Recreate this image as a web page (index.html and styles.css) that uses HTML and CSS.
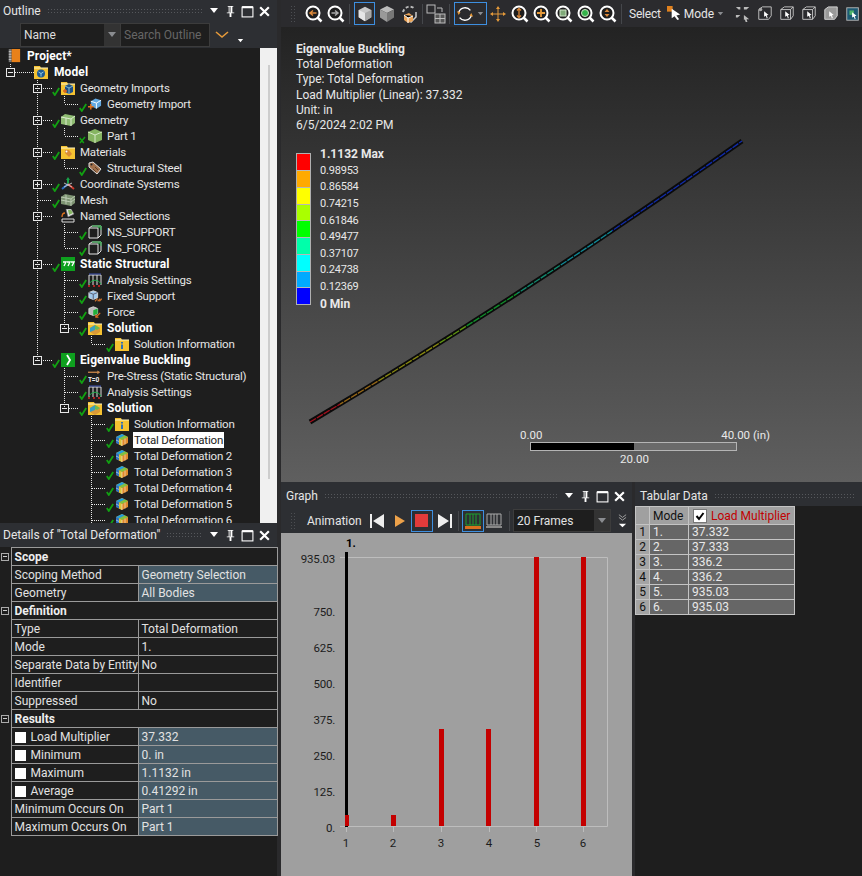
FILE: index.html
```html
<!DOCTYPE html>
<html lang="en">
  <head>
    <meta charset="UTF-8" />
    <title>Mechanical</title>
    <link rel="stylesheet" href="styles.css">
  </head>
  <body>
    <svg class="defs" width="0" height="0">
      <symbol id="i-drop" viewBox="0 0 10 6"><path d="M1 0h8L5 5z" fill="#fff"/></symbol>
      <symbol id="i-drop-gray" viewBox="0 0 10 6"><path d="M1 0h8L5 5z" fill="#8a8c90"/></symbol>
      <symbol id="i-pin" viewBox="0 0 12 14"><path d="M3 1h6v1H8v6h2v1H7v4H5V9H2V8h2V2H3zM5 2v6h1V2z" fill="#fff"/></symbol>
      <symbol id="i-max" viewBox="0 0 12 12"><rect x="1" y="2" width="10" height="9" fill="none" stroke="#fff" stroke-width="1"/><path d="M1 2h10" stroke="#fff" stroke-width="2"/></symbol>
      <symbol id="i-close" viewBox="0 0 12 12"><path d="M2 2l8 8M10 2l-8 8" stroke="#fff" stroke-width="2"/></symbol>

      <symbol id="i-check" viewBox="0 0 8 9"><path d="M.8 5l2 3L7.2 1" fill="none" stroke="#12a012" stroke-width="1.8"/></symbol>
      <symbol id="i-check-x" viewBox="0 0 8 9"><path d="M.8 3l4 5M1 8l5-6" fill="none" stroke="#12a012" stroke-width="1.5"/></symbol>
      <symbol id="i-book" viewBox="0 0 14 16"><rect x="4" y="0" width="10" height="15" fill="#e8811a"/><rect x="1" y="0" width="3" height="15" fill="#777"/><path d="M1 3h3M1 6h3M1 9h3M1 12h3" stroke="#ccc"/></symbol>
      <symbol id="i-folder" viewBox="0 0 14 14"><path d="M0 1h6l1 2h7v11H0z" fill="#f5c231"/><path d="M0 3h14" stroke="#fff3c0"/></symbol>
      <symbol id="i-model" viewBox="0 0 14 14"><use href="#i-folder"/><circle cx="7" cy="8.500" r="4" fill="#1d5a94"/><path d="M4.500 7l2.500 1.500L9.500 7M7 8.500v3" stroke="#9cd" fill="none"/></symbol>
      <symbol id="i-geoimp" viewBox="0 0 14 14"><use href="#i-folder"/><path d="M4 5l4-2 4 2v6l-4 2-4-2z" fill="#1d4f86"/><path d="M4 5l4 2 4-2M8 7v6" stroke="#8bc" fill="none"/><path d="M2 10h4M4 8v4" stroke="#d9631e" stroke-width="1.500"/></symbol>
      <symbol id="i-import" viewBox="0 0 15 14"><path d="M3 4l5-3 6 2v6l-5 3-6-3z" fill="#63a9e2"/><path d="M3 4l6 2 5-3M9 6v6" stroke="#fff" fill="none"/><path d="M0 10h6M3 7v6" stroke="#e0731e" stroke-width="1.600"/></symbol>
      <symbol id="i-geom" viewBox="0 0 14 14"><path d="M0 4l4-3 10 2v7l-4 3-10-2z" fill="#8fbc72"/><path d="M0 4l10 2 4-3M10 6v7M5 5v7" stroke="#dcebd0" fill="none"/></symbol>
      <symbol id="i-part" viewBox="0 0 14 14"><path d="M7 0l7 3v8l-7 3-7-3V3z" fill="#86b562"/><path d="M0 3l7 3 7-3M7 6v8" stroke="#d5e8c6" fill="none"/></symbol>
      <symbol id="i-mats" viewBox="0 0 14 14"><use href="#i-folder"/><path d="M4 5h4l3 4-3 3-4-4z" fill="#d98a35"/><circle cx="5.500" cy="6.500" r="1" fill="#fff"/></symbol>
      <symbol id="i-tag" viewBox="0 0 14 14"><path d="M1 2l4-1 8 7-4 5-8-7z" fill="#a0704c" stroke="#ddd"/><path d="M7 6l3 3M5 8l3 3" stroke="#5f3f25"/><circle cx="3.500" cy="3.500" r="1" fill="#222"/></symbol>
      <symbol id="i-coord" viewBox="0 0 14 14"><path d="M7 7V2" stroke="#19a34a" stroke-width="2"/><path d="M5 3l2-3 2 3z" fill="#19a34a"/><path d="M7 7l-6 5" stroke="#2d6cc0" stroke-width="2"/><path d="M7 7l6 5" stroke="#d0392b" stroke-width="2"/><path d="M3 6l8 4M11 6l-8 4" stroke="#ddd" stroke-width=".8"/></symbol>
      <symbol id="i-mesh" viewBox="0 0 14 14"><path d="M0 4l4-3 10 2v7l-4 3-10-2z" fill="#7e9372"/><path d="M0 4l10 2 4-3M10 6v7M5 2v9M0 7l10 2 4-3" stroke="#c9d6c0" stroke-width=".8" fill="none"/></symbol>
      <symbol id="i-named" viewBox="0 0 14 14"><path d="M5 0h5l3 5-6 3z" fill="#e9e9e9" stroke="#777" stroke-width=".6"/><path d="M7 1h3l2 3-4 2z" fill="#86b562"/><path d="M1 10h12v3H1z" fill="none" stroke="#ddd"/><path d="M1 8c0-3 1-4 3-4" stroke="#e0731e" fill="none" stroke-width="1.300"/></symbol>
      <symbol id="i-ns" viewBox="0 0 14 14"><path d="M1 3h9v10H1zM1 3l3-2h9v9l-3 3" fill="none" stroke="#e4e4e4"/><path d="M4 1h9M13 1v4M10 3l3-2" stroke="#2fb34a"/></symbol>
      <symbol id="i-static" viewBox="0 0 14 14"><rect width="14" height="14" fill="#0ea01e"/><path d="M2 5h3l-2 4M6 5h3l-2 4M10 5h3l-2 4" fill="none" stroke="#fff" stroke-width="1.300"/></symbol>
      <symbol id="i-eigen" viewBox="0 0 14 14"><rect width="14" height="14" fill="#0ea01e"/><path d="M6 2l3 5-3 5" fill="none" stroke="#fff" stroke-width="1.800"/></symbol>
      <symbol id="i-analysis" viewBox="0 0 14 14"><path d="M1 2h12v10M1 2v10M5 2v10M9 2v10" stroke="#ddd" fill="none"/><path d="M1 1h12" stroke="#3a4fb0"/><path d="M1 11c3-5 9-5 12 0" stroke="#1cb04a" fill="none"/><path d="M0 13h14" stroke="#d22" stroke-dasharray="2 3" stroke-width="1.500"/></symbol>
      <symbol id="i-fixed" viewBox="0 0 16 14"><path d="M1 3l5-2 5 2v6l-5 2-5-2z" fill="#9fc7ea" stroke="#ddd"/><path d="M1 3l5 2 5-2M6 5v6" stroke="#556" fill="none"/><path d="M8 13l3-3M11 13l3-3M13 13l3-3" stroke="#c9702a" stroke-width="1.300"/></symbol>
      <symbol id="i-force" viewBox="0 0 16 14"><path d="M1 3l5-2 5 2v6l-5 2-5-2z" fill="#bbb" stroke="#ddd"/><path d="M6 5l5-2v6l-5 2z" fill="#22b03a"/><path d="M14 8l-5 5M9 10v3h3" stroke="#d9701e" stroke-width="1.400" fill="none"/></symbol>
      <symbol id="i-solution" viewBox="0 0 14 14"><use href="#i-folder"/><path d="M2 7l5-3 5 3v4l-5 3-5-3z" fill="#d99a38"/><path d="M2 7l5-3v5l-5 2z" fill="#3aa0c0"/><path d="M7 4l5 3-3 2-2-1z" fill="#6dbb50"/></symbol>
      <symbol id="i-info" viewBox="0 0 14 14"><use href="#i-folder"/><path d="M6 5h2v1.500H6zM6 7.500h2V12H6z" fill="#2f6fb5"/></symbol>
      <symbol id="i-result" viewBox="0 0 14 14"><path d="M1 4l6-3 6 3v6l-6 3-6-3z" fill="#e08b2c"/><path d="M1 4l6-3 3 1.500-6 3z" fill="#23a0d8"/><path d="M4 5.500l6-3 3 1.500-6 3z" fill="#7fc240"/><path d="M1 4v6l3 1.500V5.500z" fill="#2c70c0"/><path d="M4 5.500L7 7v6l-3-1.500z" fill="#d9c23a"/><path d="M7 7v6M1 7l3 1.500M10 5.500v6" stroke="#fff" stroke-width=".5"/></symbol>
      <symbol id="i-chevron" viewBox="0 0 14 8"><path d="M1 1l6 5 6-5" fill="none" stroke="#e59a3a" stroke-width="1.600"/></symbol>

      <symbol id="mag" viewBox="0 0 20 20"><circle cx="9" cy="9" r="6.500" fill="#1e1e1e" stroke="#fff" stroke-width="2"/><path d="M13.500 13.500l4 4" stroke="#fff" stroke-width="2.500"/></symbol>
      <symbol id="t-back" viewBox="0 0 20 20"><use href="#mag"/><path d="M12.500 9H7M9 6.500L6 9l3 2.500" fill="none" stroke="#e08b3a" stroke-width="1.500"/></symbol>
      <symbol id="t-next" viewBox="0 0 20 20"><use href="#mag"/><path d="M5.500 9H11M9 6.500L12 9l-3 2.500" fill="none" stroke="#aaa" stroke-width="1.500"/></symbol>
      <symbol id="t-iso" viewBox="0 0 20 20"><path d="M10 2l7 3.500v8L10 18l-7-4.500v-8z" fill="#c9c9c9"/><path d="M3 5.500L10 9v9l-7-4.500z" fill="#e6e6e6"/><path d="M10 9l7-3.500v8L10 18z" fill="#a8a8a8"/></symbol>
      <symbol id="t-iso2" viewBox="0 0 20 20"><path d="M10 2l7 3.500-7 3.500-7-3.500z" fill="#bbb"/><path d="M3 5.500L10 9v9l-7-4.500z" fill="#999"/><path d="M10 9l7-3.500v8L10 18z" fill="#777"/></symbol>
      <symbol id="t-views" viewBox="0 0 20 20"><path d="M4 8a7 7 0 0 1 12-3" fill="none" stroke="#bbb" stroke-width="2" stroke-dasharray="3 2"/><path d="M17 8v5l-5 5-3-2" fill="none" stroke="#ccc" stroke-width="1.500"/><path d="M5 11l5-2 4 3v5l-5 2-4-3z" fill="#eba55a"/><path d="M5 11l4 3 5-2M9 14v5" stroke="#fff"/></symbol>
      <symbol id="t-grid" viewBox="0 0 20 20"><rect x="1" y="1" width="8" height="8" fill="none" stroke="#bbb"/><rect x="9" y="10" width="10" height="9" fill="#555" stroke="#bbb"/><path d="M14 10v9M9 14.500h10M11 4h5v4" fill="none" stroke="#bbb"/></symbol>
      <symbol id="t-rotate" viewBox="0 0 20 20"><path d="M3 8a7.500 7.500 0 0 1 13-2" fill="none" stroke="#fff" stroke-width="1.500"/><path d="M17 12a7.500 7.500 0 0 1-13 2" fill="none" stroke="#fff" stroke-width="1.500"/><path d="M1 7l4 1-2 3zM19 13l-4-1 2-3z" fill="#e59a3a"/></symbol>
      <symbol id="t-pan" viewBox="0 0 20 20"><path d="M10 2l2 3H8zM10 18l-2-3h4zM2 10l3-2v4zM18 10l-3 2V8z" fill="#e59a3a"/><path d="M10 5v10M5 10h10" stroke="#e59a3a"/></symbol>
      <symbol id="t-zoom" viewBox="0 0 20 20"><use href="#mag"/><path d="M9 4.500v9M7 6.500l2-2 2 2M7 11.500l2 2 2-2" fill="none" stroke="#d9873a" stroke-width="1.300"/></symbol>
      <symbol id="t-plus" viewBox="0 0 20 20"><use href="#mag"/><path d="M9 5v8M5 9h8" stroke="#e59a3a" stroke-width="1.800"/></symbol>
      <symbol id="t-fit" viewBox="0 0 20 20"><use href="#mag"/><rect x="6" y="6" width="6" height="6" fill="#7fa978" stroke="#cfe3c8"/></symbol>
      <symbol id="t-fitsel" viewBox="0 0 20 20"><use href="#mag"/><circle cx="9" cy="9" r="3.500" fill="#34b34a" stroke="#cfe3c8"/></symbol>
      <symbol id="t-box" viewBox="0 0 20 20"><use href="#mag"/><path d="M9 5l2.500 3h-5zM9 13l-2.500-3h5z" fill="#d9873a"/></symbol>
      <symbol id="t-arrow" viewBox="0 0 16 16"><rect width="6" height="6" fill="#e0811e"/><path d="M5 3l9 6-4 1 3 4-2 1-3-4-3 2z" fill="#fff"/></symbol>
      <symbol id="t-sel1" viewBox="0 0 18 18"><path d="M1 1h5v3H4L1 1zM10 1h6l-3 3h-3zM1 10h5l-3 3H1zM10 10l6 5-3 0 1 3-2 0-1-3-1 1z" fill="#bbb"/></symbol>
      <symbol id="t-sel2" viewBox="0 0 18 18"><path d="M2 4l4-3h10v10l-3 4H2z" fill="none" stroke="#ccc"/><circle cx="4" cy="4" r="2" fill="#aaa"/><path d="M8 6l5 4-2 .5 1 3-1 .5-1-3-2 1z" fill="#fff"/></symbol>
      <symbol id="t-sel3" viewBox="0 0 18 18"><path d="M2 4l4-3h10v10l-3 4H2zM2 4h11v11M13 4l3-3" fill="none" stroke="#ccc"/><path d="M7 6l5 4-2 .5 1 3-1 .5-1-3-2 1z" fill="#fff"/></symbol>
      <symbol id="t-sel4" viewBox="0 0 18 18"><path d="M2 4l4-3h10v10l-3 4H2z" fill="#999" stroke="#ddd"/><path d="M7 6l5 4-2 .5 1 3-1 .5-1-3-2 1z" fill="#fff"/></symbol>
      <symbol id="t-sel5" viewBox="0 0 18 18"><rect x="2" y="2" width="13" height="14" fill="#1d5a74" stroke="#bbb"/><path d="M5 5h5v5H5z" fill="#4db36a"/><path d="M8 7l5 4-2 .5 1 3-1 .5-1-3-2 1z" fill="#fff"/></symbol>
      <symbol id="t-first" viewBox="0 0 16 16"><path d="M1 1h2v14H1zM15 1v14L4 8z" fill="#eee"/></symbol>
      <symbol id="t-last" viewBox="0 0 16 16"><path d="M13 1h2v14h-2zM1 1v14l11-7z" fill="#eee"/></symbol>
      <symbol id="t-play" viewBox="0 0 16 16"><path d="M3 2l10 6-10 6z" fill="#eda24a"/></symbol>
      <symbol id="t-stop" viewBox="0 0 16 16"><rect x="1" y="1" width="13" height="13" fill="#e23b3b"/></symbol>
      <symbol id="t-distrib" viewBox="0 0 16 16"><path d="M1 1h14v11H1zM5 1v11M8 1v11M11 1v11" fill="none" stroke="#1fa02f"/><path d="M0 13h16v3H0z" fill="#d9701e"/></symbol>
      <symbol id="t-distrib2" viewBox="0 0 16 16"><path d="M1 1h14v11H1zM5 1v11M8 1v11M11 1v11" fill="none" stroke="#aaa"/><path d="M0 13h16v2H0z" fill="#888"/></symbol>
      <symbol id="t-more" viewBox="0 0 10 16"><path d="M1 1l4 3 4-3M1 4l4 3 4-3" fill="none" stroke="#aaa"/><path d="M1 11h8l-4 4z" fill="#fff"/></symbol>
    </svg>

    <div class="app">
      <div class="left">
        <section class="outline">
          <div class="titlebar title-outline">
            <span class="title-text">Outline</span>
            <span class="grip"></span>
            <span class="title-icons">
              <svg class="ti-drop"><use href="#i-drop"/></svg>
              <svg class="ti"><use href="#i-pin"/></svg>
              <svg class="ti"><use href="#i-max"/></svg>
              <svg class="ti"><use href="#i-close"/></svg>
            </span>
          </div>
          <div class="tool-outline">
            <div class="combo">
              <span class="combo-text">Name</span>
              <span class="combo-btn"><svg class="ti-drop"><use href="#i-drop-gray"/></svg></span>
            </div>
            <div class="search">Search Outline</div>
            <svg class="chevron"><use href="#i-chevron"/></svg>
            <svg class="small-drop"><use href="#i-drop"/></svg>
          </div>
          <div class="tree-wrap">
            <div class="tree">
              <svg class="connectors" viewBox="0 48 110 480">
                <path class="dots" d="M10.500 64v4M15 72.500h19M37.500 80v280M43 88.500h9M43 120.500h9M43 152.500h9M43 184.500h9M38 200.500h14M43 216.500h9M43 264.500h9M43 360.500h9
                  M64.500 96v8M64.500 128v8M64.500 160v8M64.500 224v24M64.500 272v56M64.500 368v40
                  M65 104.500h14M65 136.500h14M65 168.500h14M65 232.500h14M65 248.500h14M65 280.500h14M65 296.500h14M65 312.500h14M65 376.500h14M65 392.500h14M69 328.500h10M69 408.500h10
                  M91.500 336v8M91.500 416v112M92 344.500h14M92 424.500h14M92 440.500h14M92 456.500h14M92 472.500h14M92 488.500h14M92 504.500h14M92 520.500h14"/>
                <g class="boxes">
                  <path d="M6.500 68.500h8v8h-8zM8 72.500h5"/>
                  <path d="M33.500 84.500h8v8h-8zM35 88.500h5"/>
                  <path d="M33.500 116.500h8v8h-8zM35 120.500h5"/>
                  <path d="M33.500 148.500h8v8h-8zM35 152.500h5"/>
                  <path d="M33.500 180.500h8v8h-8zM35 184.500h5M37.500 182v5"/>
                  <path d="M33.500 212.500h8v8h-8zM35 216.500h5"/>
                  <path d="M33.500 260.500h8v8h-8zM35 264.500h5"/>
                  <path d="M33.500 356.500h8v8h-8zM35 360.500h5"/>
                  <path d="M60.500 324.500h8v8h-8zM62 328.500h5"/>
                  <path d="M60.500 404.500h8v8h-8zM62 408.500h5"/>
                </g>
              </svg>
              <div class="row d0 bold"><svg class="ic"><use href="#i-book"/></svg><span>Project*</span></div>
              <div class="row d1 bold"><svg class="ic"><use href="#i-model"/></svg><span>Model</span></div>
              <div class="row d2"><svg class="ck"><use href="#i-check"/></svg><svg class="ic"><use href="#i-geoimp"/></svg><span>Geometry Imports</span></div>
              <div class="row d3"><svg class="ck"><use href="#i-check"/></svg><svg class="ic"><use href="#i-import"/></svg><span>Geometry Import</span></div>
              <div class="row d2"><svg class="ck"><use href="#i-check"/></svg><svg class="ic"><use href="#i-geom"/></svg><span>Geometry</span></div>
              <div class="row d3"><svg class="ck"><use href="#i-check-x"/></svg><svg class="ic"><use href="#i-part"/></svg><span>Part 1</span></div>
              <div class="row d2"><svg class="ck"><use href="#i-check"/></svg><svg class="ic"><use href="#i-mats"/></svg><span>Materials</span></div>
              <div class="row d3"><svg class="ck"><use href="#i-check"/></svg><svg class="ic"><use href="#i-tag"/></svg><span>Structural Steel</span></div>
              <div class="row d2"><svg class="ck"><use href="#i-check"/></svg><svg class="ic"><use href="#i-coord"/></svg><span>Coordinate Systems</span></div>
              <div class="row d2"><svg class="ck"><use href="#i-check"/></svg><svg class="ic"><use href="#i-mesh"/></svg><span>Mesh</span></div>
              <div class="row d2"><span class="ck"></span><svg class="ic"><use href="#i-named"/></svg><span>Named Selections</span></div>
              <div class="row d3"><svg class="ck"><use href="#i-check"/></svg><svg class="ic"><use href="#i-ns"/></svg><span>NS_SUPPORT</span></div>
              <div class="row d3"><svg class="ck"><use href="#i-check"/></svg><svg class="ic"><use href="#i-ns"/></svg><span>NS_FORCE</span></div>
              <div class="row d2 bold"><svg class="ck"><use href="#i-check"/></svg><svg class="ic"><use href="#i-static"/></svg><span>Static Structural</span></div>
              <div class="row d3"><svg class="ck"><use href="#i-check"/></svg><svg class="ic"><use href="#i-analysis"/></svg><span>Analysis Settings</span></div>
              <div class="row d3"><svg class="ck"><use href="#i-check"/></svg><svg class="ic"><use href="#i-fixed"/></svg><span>Fixed Support</span></div>
              <div class="row d3"><svg class="ck"><use href="#i-check"/></svg><svg class="ic"><use href="#i-force"/></svg><span>Force</span></div>
              <div class="row d3 bold"><svg class="ck"><use href="#i-check"/></svg><svg class="ic"><use href="#i-solution"/></svg><span>Solution</span></div>
              <div class="row d4"><svg class="ck"><use href="#i-check"/></svg><svg class="ic"><use href="#i-info"/></svg><span>Solution Information</span></div>
              <div class="row d2 bold"><svg class="ck"><use href="#i-check"/></svg><svg class="ic"><use href="#i-eigen"/></svg><span>Eigenvalue Buckling</span></div>
              <div class="row d3"><svg class="ck"><use href="#i-check"/></svg><svg class="ic" viewBox="0 0 15 14"><path d="M0 3h12" stroke="#c8874a" stroke-width="1.400"/><path d="M10 1l3 2-3 2z" fill="#c8874a"/><text x="0" y="13" class="t0-text">T=0</text></svg><span>Pre-Stress (Static Structural)</span></div>
              <div class="row d3"><svg class="ck"><use href="#i-check"/></svg><svg class="ic"><use href="#i-analysis"/></svg><span>Analysis Settings</span></div>
              <div class="row d3 bold"><svg class="ck"><use href="#i-check"/></svg><svg class="ic"><use href="#i-solution"/></svg><span>Solution</span></div>
              <div class="row d4"><svg class="ck"><use href="#i-check"/></svg><svg class="ic"><use href="#i-info"/></svg><span>Solution Information</span></div>
              <div class="row d4"><svg class="ck"><use href="#i-check"/></svg><svg class="ic"><use href="#i-result"/></svg><span class="selected">Total Deformation</span></div>
              <div class="row d4"><svg class="ck"><use href="#i-check"/></svg><svg class="ic"><use href="#i-result"/></svg><span>Total Deformation 2</span></div>
              <div class="row d4"><svg class="ck"><use href="#i-check"/></svg><svg class="ic"><use href="#i-result"/></svg><span>Total Deformation 3</span></div>
              <div class="row d4"><svg class="ck"><use href="#i-check"/></svg><svg class="ic"><use href="#i-result"/></svg><span>Total Deformation 4</span></div>
              <div class="row d4"><svg class="ck"><use href="#i-check"/></svg><svg class="ic"><use href="#i-result"/></svg><span>Total Deformation 5</span></div>
              <div class="row d4"><svg class="ck"><use href="#i-check"/></svg><svg class="ic"><use href="#i-result"/></svg><span>Total Deformation 6</span></div>
            </div>
            <div class="scrollbar"><div class="thumb"></div></div>
          </div>
        </section>

        <section class="details">
          <div class="titlebar title-details">
            <span class="title-text">Details of "Total Deformation"</span>
            <span class="grip"></span>
            <span class="title-icons">
              <svg class="ti-drop"><use href="#i-drop"/></svg>
              <svg class="ti"><use href="#i-pin"/></svg>
              <svg class="ti"><use href="#i-max"/></svg>
              <svg class="ti"><use href="#i-close"/></svg>
            </span>
          </div>
          <table class="props">
            <colgroup><col class="col-gut"><col class="col-label"><col class="col-val"></colgroup>
            <tr class="sec"><td class="gut"><span class="exp"></span></td><td colspan="2">Scope</td></tr>
            <tr><td class="gut"></td><td>Scoping Method</td><td class="val">Geometry Selection</td></tr>
            <tr><td class="gut"></td><td>Geometry</td><td class="val">All Bodies</td></tr>
            <tr class="sec"><td class="gut"><span class="exp"></span></td><td colspan="2">Definition</td></tr>
            <tr><td class="gut"></td><td>Type</td><td>Total Deformation</td></tr>
            <tr><td class="gut"></td><td>Mode</td><td>1.</td></tr>
            <tr><td class="gut"></td><td>Separate Data by Entity</td><td>No</td></tr>
            <tr><td class="gut"></td><td>Identifier</td><td></td></tr>
            <tr><td class="gut"></td><td>Suppressed</td><td>No</td></tr>
            <tr class="sec"><td class="gut"><span class="exp"></span></td><td colspan="2">Results</td></tr>
            <tr><td class="gut"></td><td><span class="box"></span>Load Multiplier</td><td class="val">37.332</td></tr>
            <tr><td class="gut"></td><td><span class="box"></span>Minimum</td><td class="val">0. in</td></tr>
            <tr><td class="gut"></td><td><span class="box"></span>Maximum</td><td class="val">1.1132 in</td></tr>
            <tr><td class="gut"></td><td><span class="box"></span>Average</td><td class="val">0.41292 in</td></tr>
            <tr><td class="gut"></td><td>Minimum Occurs On</td><td class="val">Part 1</td></tr>
            <tr><td class="gut"></td><td>Maximum Occurs On</td><td class="val">Part 1</td></tr>
          </table>
        </section>
      </div>

      <div class="right">
        <div class="toolbar">
          <span class="tb-grip"></span>
          <svg class="tb"><use href="#t-back"/></svg>
          <svg class="tb"><use href="#t-next"/></svg>
          <span class="sep"></span>
          <span class="tb-on"><svg class="tb-in"><use href="#t-iso"/></svg></span>
          <svg class="tb"><use href="#t-iso2"/></svg>
          <svg class="tb"><use href="#t-views"/></svg>
          <span class="sep"></span>
          <svg class="tb"><use href="#t-grid"/></svg>
          <span class="sep"></span>
          <span class="tb-on wide"><svg class="tb-in"><use href="#t-rotate"/></svg><svg class="mini-drop"><use href="#i-drop-gray"/></svg></span>
          <svg class="tb"><use href="#t-pan"/></svg>
          <svg class="tb"><use href="#t-zoom"/></svg>
          <svg class="tb"><use href="#t-plus"/></svg>
          <svg class="tb"><use href="#t-fit"/></svg>
          <svg class="tb"><use href="#t-fitsel"/></svg>
          <svg class="tb"><use href="#t-box"/></svg>
          <span class="sep"></span>
          <span class="tb-label select-label">Select</span>
          <svg class="tb-arrow"><use href="#t-arrow"/></svg>
          <span class="tb-label">Mode</span>
          <svg class="mini-drop"><use href="#i-drop-gray"/></svg>
          <svg class="tb-sel first"><use href="#t-sel1"/></svg>
          <svg class="tb-sel"><use href="#t-sel2"/></svg>
          <svg class="tb-sel"><use href="#t-sel3"/></svg>
          <svg class="tb-sel"><use href="#t-sel3"/></svg>
          <svg class="tb-sel"><use href="#t-sel4"/></svg>
          <svg class="tb-sel"><use href="#t-sel5"/></svg>
        </div>

        <div class="viewport">
          <div class="annot">
            <div class="annot-head">Eigenvalue Buckling</div>
            <div>Total Deformation</div>
            <div>Type: Total Deformation</div>
            <div>Load Multiplier (Linear): 37.332</div>
            <div>Unit: in</div>
            <div>6/5/2024 2:02 PM</div>
          </div>
          <div class="legend">
            <div class="legend-bar">
              <span class="c1"></span><span class="c2"></span><span class="c3"></span>
              <span class="c4"></span><span class="c5"></span><span class="c6"></span>
              <span class="c7"></span><span class="c8"></span><span class="c9"></span>
            </div>
            <div class="legend-vals">
              <b>1.1132 Max</b>
              <span>0.98953</span><span>0.86584</span><span>0.74215</span><span>0.61846</span>
              <span>0.49477</span><span>0.37107</span><span>0.24738</span><span>0.12369</span>
              <b>0 Min</b>
            </div>
          </div>
          <svg class="beam" viewBox="281 27 581 455">
            <defs>
              <linearGradient id="beamColors" gradientUnits="userSpaceOnUse" x1="310" y1="0" x2="742" y2="0">
                <stop offset="0" stop-color="#c01020"/>
                <stop offset=".07" stop-color="#c01020"/>
                <stop offset=".07" stop-color="#b07818"/>
                <stop offset=".16" stop-color="#b07818"/>
                <stop offset=".16" stop-color="#a0a010"/>
                <stop offset=".30" stop-color="#a0a010"/>
                <stop offset=".30" stop-color="#70b010"/>
                <stop offset=".36" stop-color="#70b010"/>
                <stop offset=".36" stop-color="#10a830"/>
                <stop offset=".48" stop-color="#10a830"/>
                <stop offset=".48" stop-color="#10a080"/>
                <stop offset=".58" stop-color="#10a080"/>
                <stop offset=".58" stop-color="#10a0b0"/>
                <stop offset=".70" stop-color="#10a0b0"/>
                <stop offset=".70" stop-color="#1030c8"/>
                <stop offset="1" stop-color="#1030c8"/>
              </linearGradient>
            </defs>
            <path class="beam-body" d="M310 422Q526 294 742 141"/>
            <path class="beam-line" d="M310 422Q526 294 742 141"/>
          </svg>
          <div class="scale">
            <div class="scale-top"><span>0.00</span><span>40.00 (in)</span></div>
            <div class="scale-bar"><div class="scale-half"></div></div>
            <div class="scale-mid">20.00</div>
          </div>
        </div>

        <div class="bottom">
          <section class="graph">
            <div class="titlebar title-graph">
              <span class="title-text">Graph</span>
              <span class="grip"></span>
              <span class="title-icons">
                <svg class="ti-drop"><use href="#i-drop"/></svg>
                <svg class="ti"><use href="#i-pin"/></svg>
                <svg class="ti"><use href="#i-max"/></svg>
                <svg class="ti"><use href="#i-close"/></svg>
              </span>
            </div>
            <div class="tool-graph">
              <span class="tb-grip"></span>
              <span class="anim-label">Animation</span>
              <svg class="an"><use href="#t-first"/></svg>
              <svg class="an an-play"><use href="#t-play"/></svg>
              <span class="an-on an-stop"><svg class="an"><use href="#t-stop"/></svg></span>
              <svg class="an an-last"><use href="#t-last"/></svg>
              <span class="sep sep-a"></span>
              <span class="an-on"><svg class="an"><use href="#t-distrib"/></svg></span>
              <svg class="an an-dist"><use href="#t-distrib2"/></svg>
              <span class="sep sep-b"></span>
              <div class="frames"><span>20 Frames</span><span class="frames-btn"><svg class="ti-drop"><use href="#i-drop-gray"/></svg></span></div>
              <svg class="more"><use href="#t-more"/></svg>
            </div>
            <svg class="chart" viewBox="281 533 351 343">
              <path class="frame" d="M340 557.500H607.500V826.500H340"/>
              <path class="frame" d="M346.500 827v5M393.500 827v5M441.500 827v5M489.500 827v5M536.500 827v5M583.500 827v5"/>
              <rect class="cursor" x="345" y="552" width="3" height="275"/>
              <rect class="bar" x="345" y="815" width="4" height="11"/>
              <rect class="bar" x="391" y="815" width="5" height="11"/>
              <rect class="bar" x="439" y="729" width="5" height="97"/>
              <rect class="bar" x="486" y="729" width="5" height="97"/>
              <rect class="bar" x="534" y="557" width="5" height="269"/>
              <rect class="bar" x="581" y="557" width="5" height="269"/>
              <text class="mark" x="346" y="547">1.</text>
              <g class="y-labels">
                <text x="335" y="563">935.03</text>
                <text x="335" y="616">750.</text>
                <text x="335" y="652">625.</text>
                <text x="335" y="688">500.</text>
                <text x="335" y="724">375.</text>
                <text x="335" y="760">250.</text>
                <text x="335" y="796">125.</text>
                <text x="335" y="832">0.</text>
              </g>
              <g class="x-labels">
                <text x="346" y="847">1</text>
                <text x="393" y="847">2</text>
                <text x="441" y="847">3</text>
                <text x="489" y="847">4</text>
                <text x="537" y="847">5</text>
                <text x="583" y="847">6</text>
              </g>
            </svg>
          </section>

          <section class="tabular">
            <div class="titlebar title-tab">
              <span class="title-text">Tabular Data</span>
              <span class="grip"></span>
            </div>
            <table class="tab">
              <tr class="head">
                <th class="rh"></th>
                <th class="mode">Mode</th>
                <th class="lm"><span class="tick"><svg viewBox="0 0 10 10"><path d="M1.500 5l2.500 3 4.500-6" fill="none" stroke="#000" stroke-width="2"/></svg></span>Load Multiplier</th>
              </tr>
              <tr><td class="rh">1</td><td>1.</td><td>37.332</td></tr>
              <tr><td class="rh">2</td><td>2.</td><td>37.333</td></tr>
              <tr><td class="rh">3</td><td>3.</td><td>336.2</td></tr>
              <tr><td class="rh">4</td><td>4.</td><td>336.2</td></tr>
              <tr><td class="rh">5</td><td>5.</td><td>935.03</td></tr>
              <tr><td class="rh">6</td><td>6.</td><td>935.03</td></tr>
            </table>
          </section>
        </div>
      </div>
    </div>
  </body>
</html>
```

FILE: styles.css
```css
* {
  box-sizing: border-box;
}

html,
body {
  margin: 0;
  height: 100%;
  overflow: hidden;
}

body {
  background-color: #2a2a2c;
  color: #eee;
  font-family: Roboto, "Noto Sans", sans-serif;
  font-size: 12px;
}

.defs {
  position: absolute;
}

.t0-text {
  font-size: 7px;
  font-weight: 700;
  fill: #eee;
}

.app {
  display: grid;
  grid-template-columns: 277px 581px;
  column-gap: 4px;
  width: 862px;
  height: 876px;
}

.left,
.right {
  display: flex;
  flex-direction: column;
  height: 876px;
  min-width: 0;
}

/* dockable panel title */
.titlebar {
  display: flex;
  align-items: center;
  background-color: #2d2f33;
  padding-left: 3px;
  flex: none;
}

.title-outline {
  height: 22px;
}

.title-details {
  height: 24px;
}

.title-graph {
  height: 26px;
  padding-left: 5px;
  padding-top: 2px;
}

.title-tab {
  height: 24px;
  padding-left: 5px;
  padding-top: 3px;
}

.title-text {
  font-size: 12px;
  color: #e6e6e6;
  white-space: nowrap;
}

.grip {
  flex: 1;
  height: 6px;
  margin: 0 6px;
  background-image: radial-gradient(#55575b 0.7px, transparent 0.8px);
  background-size: 3px 3px;
}

.title-icons {
  display: flex;
  align-items: center;
  gap: 4px;
  padding-right: 6px;
}

.ti-drop {
  width: 10px;
  height: 6px;
  margin-right: 1px;
}

.ti {
  width: 13px;
  height: 13px;
}

/* outline */
.outline {
  height: 523px;
  display: flex;
  flex-direction: column;
  flex: none;
}

.tool-outline {
  height: 26px;
  flex: none;
  background-color: #2d2f33;
  display: flex;
  align-items: center;
  padding-left: 20px;
}

.combo {
  width: 101px;
  height: 24px;
  background-color: #1e1e1e;
  border: 1px solid #3c3c3c;
  display: flex;
  align-items: center;
  justify-content: space-between;
}

.combo-text {
  padding-left: 3px;
  font-size: 12px;
  color: #ddd;
}

.combo-btn {
  width: 16px;
  height: 22px;
  background-color: #333;
  display: flex;
  align-items: center;
  justify-content: center;
}

.search {
  width: 89px;
  height: 24px;
  line-height: 22px;
  background-color: #1e1e1e;
  border: 1px solid #3c3c3c;
  border-left: 0;
  padding-left: 3px;
  font-size: 12px;
  color: #666;
  white-space: nowrap;
  overflow: hidden;
}

.chevron {
  width: 14px;
  height: 8px;
  margin-left: 5px;
}

.small-drop {
  width: 7px;
  height: 4px;
  margin-left: 8px;
  margin-top: 11px;
}

.tree-wrap {
  flex: 1;
  display: flex;
  min-height: 0;
  background-color: #1e1e1e;
}

.tree {
  position: relative;
  flex: 1;
  overflow: hidden;
}

.connectors {
  position: absolute;
  left: 0;
  top: 0;
  width: 110px;
  height: 480px;
}

.dots {
  fill: none;
  stroke: #e8e8e8;
  stroke-dasharray: 1 1;
}

.boxes path {
  fill: none;
  stroke: #e8e8e8;
  shape-rendering: crispEdges;
}

.row {
  display: flex;
  align-items: center;
  height: 16px;
  white-space: nowrap;
  color: #e6e6e6;
  font-size: 11.500px;
  letter-spacing: -0.2px;
}

.row.bold {
  font-size: 12px;
  font-weight: 700;
  letter-spacing: 0.1px;
  color: #fff;
}

.d0 {
  padding-left: 7px;
}

.d1 {
  padding-left: 34px;
}

.d2 {
  padding-left: 52px;
}

.d3 {
  padding-left: 79px;
}

.d4 {
  padding-left: 106px;
}

.ck {
  width: 8px;
  height: 9px;
  margin-top: 6px;
  margin-right: 1px;
  flex: none;
}

.ic {
  width: 14px;
  height: 14px;
  margin-right: 5px;
  flex: none;
}

.d0 .ic,
.d1 .ic {
  margin-right: 6px;
}

.selected {
  background-color: #fff;
  color: #1a1a1a;
  margin-left: -1px;
  padding: 0 1px;
  line-height: 16px;
}

.scrollbar {
  width: 17px;
  flex: none;
  background-color: #f0f0f0;
  padding-top: 17px;
}

.thumb {
  width: 2px;
  height: 414px;
  margin-left: 8px;
  background-color: #cdcdcd;
}

/* details */
.details {
  flex: 1;
  background-color: #1e1e1e;
}

.props {
  border-collapse: collapse;
  table-layout: fixed;
  width: 277px;
  font-size: 12px;
}

.col-gut {
  width: 11px;
}

.col-label {
  width: 127px;
}

.col-val {
  width: 139px;
}

.props td {
  height: 18px;
  padding: 1px 0 0 3px;
  border: 1px solid #9a9a9a;
  color: #e2e2e2;
  white-space: nowrap;
  overflow: hidden;
  line-height: 15px;
}

.props .gut {
  border: 0;
  padding: 0 0 0 1px;
  border-right: 1px solid #9a9a9a;
}

.props .sec td:last-child {
  font-weight: 700;
  color: #eee;
}

.props .val {
  background-color: #465a66;
}

.exp {
  display: block;
  width: 8px;
  height: 8px;
  border: 1px solid #aaa;
  background: linear-gradient(#ccc, #ccc) center / 4px 1px no-repeat;
}

.box {
  display: inline-block;
  width: 11px;
  height: 11px;
  background-color: #fff;
  margin-right: 5px;
  vertical-align: -2px;
}

/* main toolbar */
.toolbar {
  height: 27px;
  flex: none;
  background-color: #2b2b2e;
  display: flex;
  align-items: center;
  padding-left: 9px;
}

.tb-grip {
  width: 5px;
  height: 18px;
  background-image: radial-gradient(#4c4e52 0.7px, transparent 0.8px);
  background-size: 3px 3px;
  margin-right: 8px;
  flex: none;
}

.tb {
  width: 20px;
  height: 20px;
  margin: 0 1px;
  flex: none;
}

.sep {
  width: 1px;
  height: 20px;
  background-color: #45474b;
  margin: 0 2px;
  flex: none;
}

.tb-on {
  height: 23px;
  width: 21px;
  border: 1px solid #3d8fe0;
  display: flex;
  align-items: center;
  justify-content: center;
  margin: 0 1px 0 2px;
  flex: none;
}

.tb-on.wide {
  width: 33px;
  justify-content: flex-start;
  padding-left: 1px;
  margin-right: 0;
}

.tb-in {
  width: 18px;
  height: 18px;
  flex: none;
}

.mini-drop {
  width: 7px;
  height: 4px;
  margin-left: 3px;
  flex: none;
}

.tb-label {
  font-size: 12px;
  color: #e6e6e6;
  margin-left: 2px;
}

.select-label {
  margin-left: 5px;
  letter-spacing: -0.2px;
}

.tb-arrow {
  width: 15px;
  height: 15px;
  margin-left: 6px;
  flex: none;
}

.tb-sel {
  width: 16px;
  height: 16px;
  margin-left: 6px;
  flex: none;
}

.tb-sel.first {
  margin-left: 11px;
}

/* 3d view */
.viewport {
  position: relative;
  height: 455px;
  flex: none;
  background: linear-gradient(#232323, #5f5f5f);
  padding: 15px 15px 0;
  overflow: hidden;
}

.annot {
  font-size: 12px;
  line-height: 15.200px;
  color: #e8e8e8;
}

.annot-head {
  font-weight: 700;
}

.legend {
  display: flex;
  margin-top: 13px;
}

.legend-bar {
  width: 15px;
  height: 152px;
  margin-top: 7px;
  margin-right: 9px;
  display: flex;
  flex-direction: column;
  border: 1px solid #b0b0b0;
}

.legend-bar span {
  flex: 1;
  border-bottom: 1px solid #b8b8b8;
}

.legend-bar span:last-child {
  border-bottom: 0;
}

.c1 { background-color: #ff0000; }
.c2 { background-color: #ffaa00; }
.c3 { background-color: #ffff00; }
.c4 { background-color: #aaff00; }
.c5 { background-color: #00ff00; }
.c6 { background-color: #00ffaa; }
.c7 { background-color: #00ffff; }
.c8 { background-color: #00aaff; }
.c9 { background-color: #0000ff; }

.legend-vals {
  display: flex;
  flex-direction: column;
  font-size: 12px;
  line-height: 16.600px;
  color: #e8e8e8;
}

.legend-vals span {
  font-size: 11px;
  letter-spacing: -0.2px;
}

.beam {
  position: absolute;
  left: 0;
  top: 0;
  width: 581px;
  height: 455px;
}

.beam-body {
  fill: none;
  stroke: #0a0a0a;
  stroke-width: 5;
}

.beam-line {
  fill: none;
  stroke: url(#beamColors);
  stroke-width: 1.300;
  stroke-dasharray: 7 1;
  opacity: 0.85;
}

.scale {
  position: absolute;
  left: 239px;
  top: 401px;
  width: 250px;
  font-size: 11.500px;
  line-height: 14px;
  color: #e8e8e8;
}

.scale-top {
  display: flex;
  justify-content: space-between;
}

.scale-bar {
  width: 207px;
  height: 9px;
  margin: 0 0 0 10px;
  border: 1px solid #b4b4b4;
  background-color: #6a6a6a;
}

.scale-half {
  width: 103px;
  height: 7px;
  background-color: #000;
}

.scale-mid {
  margin: 1px 0 0 100px;
}

/* bottom panels */
.bottom {
  flex: 1;
  display: grid;
  grid-template-columns: 351px 227px;
  column-gap: 3px;
  min-height: 0;
}

.graph {
  display: flex;
  flex-direction: column;
  min-height: 0;
}

.tool-graph {
  height: 25px;
  flex: none;
  background-color: #2d2f33;
  display: flex;
  align-items: center;
  padding-left: 9px;
}

.anim-label {
  font-size: 12px;
  color: #e6e6e6;
  width: 55px;
  margin-left: 4px;
  margin-right: 7px;
  flex: none;
}

.an {
  width: 16px;
  height: 16px;
  flex: none;
}

.an-play {
  margin-left: 7px;
}

.an-stop {
  margin-left: 3px;
}

.an-last {
  margin-left: 4px;
}

.sep-a {
  margin: 0 3px 0 5px;
}

.an-dist {
  margin-left: 2px;
}

.sep-b {
  margin: 0 3px 0 7px;
}

.an-on {
  width: 22px;
  height: 22px;
  border: 1px solid #3d8fe0;
  display: flex;
  align-items: center;
  justify-content: center;
  flex: none;
}

.frames {
  width: 98px;
  height: 23px;
  background-color: #1e1e1e;
  border: 1px solid #3c3c3c;
  display: flex;
  align-items: center;
  justify-content: space-between;
  padding-left: 3px;
  font-size: 12px;
  color: #e2e2e2;
  flex: none;
}

.frames-btn {
  width: 16px;
  height: 21px;
  display: flex;
  align-items: center;
  justify-content: center;
  background-color: #333;
}

.more {
  width: 9px;
  height: 16px;
  margin-left: 7px;
  flex: none;
}

.chart {
  display: block;
  width: 351px;
  height: 343px;
  background-color: #9f9f9f;
  flex: none;
}

.frame {
  fill: none;
  stroke: #bdbdbd;
}

.cursor {
  fill: #000;
}

.bar {
  fill: #c40000;
}

.chart text {
  font-size: 11.500px;
  letter-spacing: -0.2px;
  fill: #1c1c1c;
}

.chart .mark {
  font-weight: 700;
  fill: #000;
}

.y-labels text {
  text-anchor: end;
}

.x-labels text {
  text-anchor: middle;
}

.tabular {
  background-color: #1e1e1e;
}

.tab {
  border-collapse: collapse;
  table-layout: fixed;
  width: 160px;
  font-size: 12px;
}

.tab th,
.tab td {
  border: 1px solid #c4c4c4;
  padding: 0 0 0 3px;
  font-weight: 400;
  text-align: left;
  white-space: nowrap;
  overflow: hidden;
  height: 15px;
  line-height: 14px;
  background-color: #666;
  color: #e8e8e8;
}

.tab .head th {
  height: 18px;
  background-color: #a0a0a0;
  color: #111;
}

.tab .rh {
  width: 14px;
  background-color: #a4a4a4;
  color: #111;
  text-align: center;
  padding: 0;
}

.tab .mode {
  width: 39px;
  padding-left: 3px;
}

.tab .head .lm {
  color: #c00000;
  padding-left: 4px;
}

.tick {
  display: inline-block;
  width: 14px;
  height: 14px;
  background-color: #fff;
  border: 1px solid #777;
  padding: 1px;
  margin-right: 4px;
  vertical-align: -3px;
}

.tick svg {
  display: block;
  width: 10px;
  height: 10px;
}
```
